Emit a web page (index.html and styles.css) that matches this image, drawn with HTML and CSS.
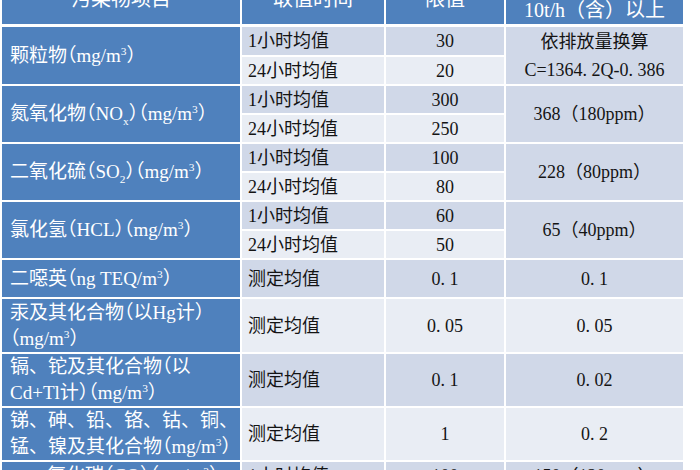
FILE: index.html
```html
<!DOCTYPE html>
<html lang="zh-CN">
<head>
<meta charset="utf-8">
<title>污染物排放限值</title>
<link rel="stylesheet" href="styles.css">
</head>
<body>
<table class="grid">
  <colgroup>
    <col class="w1"><col class="w2"><col class="w3"><col class="w4">
  </colgroup>
  <thead>
    <tr class="hd">
      <th>污染物项目</th>
      <th>取值时间</th>
      <th>限值</th>
      <th class="two">单台处理能力<br>10t/h（含）以上</th>
    </tr>
  </thead>
  <tbody>
    <tr class="h28 dk">
      <td class="name" rowspan="2">颗粒物<span class="u">（mg/m<sup>3</sup>）</span></td>
      <td class="time">1小时均值</td>
      <td class="val">30</td>
      <td class="val lh28" rowspan="2">依排放量换算<br>C=1364. 2Q-0. 386</td>
    </tr>
    <tr class="h27 lt">
      <td class="time">24小时均值</td>
      <td class="val">20</td>
    </tr>

    <tr class="h27 dk">
      <td class="name" rowspan="2">氮氧化物<span class="u">（NO<sub>x</sub>）（mg/m<sup>3</sup>）</span></td>
      <td class="time">1小时均值</td>
      <td class="val">300</td>
      <td class="val" rowspan="2">368（180ppm）</td>
    </tr>
    <tr class="h27 lt">
      <td class="time">24小时均值</td>
      <td class="val">250</td>
    </tr>

    <tr class="h27 dk">
      <td class="name" rowspan="2">二氧化硫<span class="u">（SO<sub>2</sub>）（mg/m<sup>3</sup>）</span></td>
      <td class="time">1小时均值</td>
      <td class="val">100</td>
      <td class="val" rowspan="2">228（80ppm）</td>
    </tr>
    <tr class="h27 lt">
      <td class="time">24小时均值</td>
      <td class="val">80</td>
    </tr>

    <tr class="h27 dk">
      <td class="name" rowspan="2">氯化氢<span class="u">（HCL）（mg/m<sup>3</sup>）</span></td>
      <td class="time">1小时均值</td>
      <td class="val">60</td>
      <td class="val" rowspan="2">65（40ppm）</td>
    </tr>
    <tr class="h27 lt">
      <td class="time">24小时均值</td>
      <td class="val">50</td>
    </tr>

    <tr class="h37 dk">
      <td class="name">二噁英<span class="u">（ng TEQ/m<sup>3</sup>）</span></td>
      <td class="time">测定均值</td>
      <td class="val">0. 1</td>
      <td class="val">0. 1</td>
    </tr>
    <tr class="h53 lt">
      <td class="name">汞及其化合物<span class="u">（以Hg计）</span><br><span class="u">（mg/m<sup>3</sup>）</span></td>
      <td class="time">测定均值</td>
      <td class="val">0. 05</td>
      <td class="val">0. 05</td>
    </tr>
    <tr class="h51 dk">
      <td class="name">镉、铊及其化合物<span class="u">（以</span><br>Cd+Tl计<span class="u">）（mg/m<sup>3</sup>）</span></td>
      <td class="time">测定均值</td>
      <td class="val">0. 1</td>
      <td class="val">0. 02</td>
    </tr>
    <tr class="h52 lt">
      <td class="name">锑、砷、铅、铬、钴、铜、<br>锰、镍及其化合物<span class="u">（mg/m<sup>3</sup>）</span></td>
      <td class="time">测定均值</td>
      <td class="val">1</td>
      <td class="val">0. 2</td>
    </tr>
    <tr class="h27 dk">
      <td class="name indent">一氧化碳<span class="u">（CO）（mg/m<sup>3</sup>）</span></td>
      <td class="time">1小时均值</td>
      <td class="val">100</td>
      <td class="val">150（120ppm）</td>
    </tr>
  </tbody>
</table>
</body>
</html>
```

FILE: styles.css
```css
html, body {
  margin: 0;
  padding: 0;
  background: #ffffff;
  overflow: hidden;
}

.grid {
  margin-top: -28px;
  border-collapse: separate;
  border-spacing: 2px;
  table-layout: fixed;
  width: 685px;
  background: #ffffff;
  font-family: "Liberation Serif", "Noto Sans CJK SC", serif;
  font-size: 18px;
  line-height: 26px;
  color: #141414;
}

.w1 { width: 238px; }
.w2 { width: 142px; }
.w3 { width: 118px; }
.w4 { width: 177px; }

.grid th,
.grid td {
  padding: 0;
  white-space: nowrap;
  overflow: hidden;
}

.grid .hd th {
  height: 50px;
  background: #4f81bd;
  color: #ffffff;
  font-weight: normal;
  font-size: 20px;
  line-height: 22px;
  text-align: center;
  border-bottom: 1px solid #ffffff;
}

.h27 { height: 27px; }
.h28 { height: 28px; }
.h37 { height: 37px; }
.h51 { height: 51px; }
.h52 { height: 52px; }
.h53 { height: 53px; }

.dk td { background: #d0d8e8; }
.lt td { background: #e9edf4; }

.grid td.name {
  background: #4f81bd;
  color: #ffffff;
  font-size: 19px;
  padding-left: 8px;
  text-align: left;
}

.grid td.indent {
  padding-left: 26px;
}

.u {
  font-feature-settings: "halt";
}

.grid td.time {
  padding-left: 6px;
  text-align: left;
}

.grid td.val {
  text-align: center;
}

.grid td.lh28 {
  line-height: 28px;
}

sup, sub {
  font-size: 0.6em;
  line-height: 0;
}
```
